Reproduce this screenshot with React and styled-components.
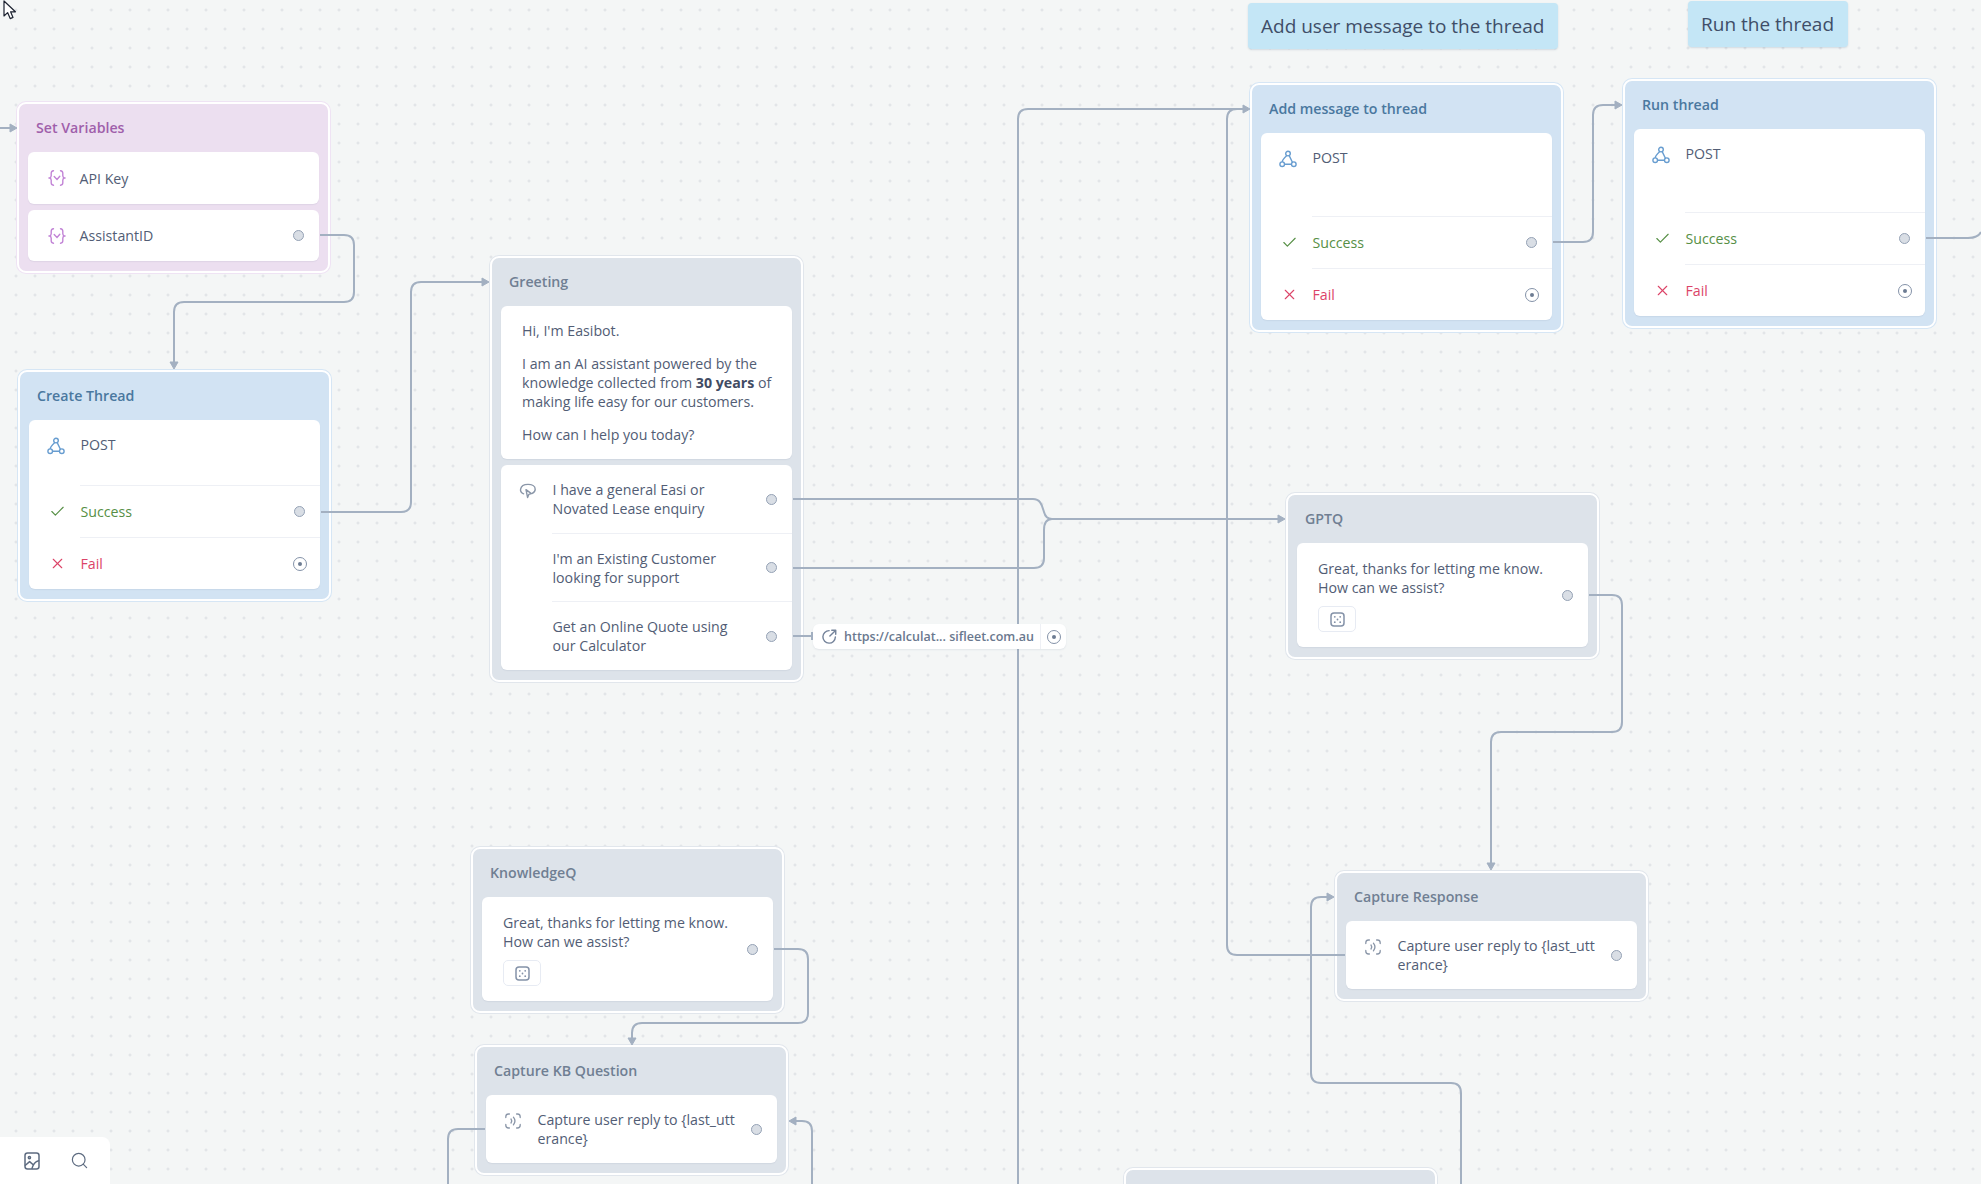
import React from "react";
import styled, { createGlobalStyle } from "styled-components";
import { Check, X, Search } from "lucide-react";

const GlobalStyle = createGlobalStyle`
  html, body {
    margin: 0;
    height: 100%;
    overflow: hidden;
  }
  body {
    font-family: "Open Sans", "Liberation Sans", sans-serif;
    color: #525d75;
  }
`;

const tones = {
  purple: { fill: "#ecdff0", ring: "#efe3f4", title: "#a05fab" },
  blue: { fill: "#d2e3f3", ring: "#d6e6f5", title: "#4a789f" },
  gray: { fill: "#dde3ea", ring: "#e1e6ec", title: "#707f93" },
};

const LINE = "#a3b0c1";

const Canvas = styled.div`
  position: relative;
  width: 1981px;
  height: 1184px;
  overflow: hidden;
  background-color: #f4f6f6;
  background-image: radial-gradient(circle, #dcdfe3 1px, transparent 1.4px);
  background-size: 19px 19px;
  background-position: 6.5px 0.5px;
`;

const Wires = styled.svg`
  position: absolute;
  inset: 0;
  pointer-events: none;
`;

const Cursor = styled.svg`
  position: absolute;
  left: 3px;
  top: 0;
`;

const Node = styled.section`
  position: absolute;
  left: ${(p) => p.$x}px;
  top: ${(p) => p.$y}px;
  box-sizing: border-box;
  width: 313px;
  padding: 0 9px 10px;
  display: flex;
  flex-direction: column;
  gap: 6px;
  background: ${(p) => tones[p.$tone].fill};
  border: 2px solid #fff;
  border-radius: 9px;
  box-shadow: 0 0 0 1px ${(p) => tones[p.$tone].ring};
`;

const Title = styled.h3`
  margin: 0 0 -6px 8px;
  height: 48px;
  line-height: 48px;
  font-size: 14.2px;
  font-weight: 600;
  color: ${(p) => tones[p.$tone].title};
`;

const Card = styled.div`
  background: #fff;
  border-radius: 6px;
  box-shadow: 0 1px 1px rgba(120, 135, 160, 0.12);
  overflow: hidden;
`;

const Row = styled.div`
  display: flex;
  height: ${(p) => p.$h}px;
  align-items: ${(p) => (p.$top ? "flex-start" : "center")};
`;

const IconCell = styled.div`
  flex: none;
  align-self: ${(p) => (p.$top ? "flex-start" : "center")};
  box-sizing: border-box;
  width: 51px;
  padding-left: ${(p) => (p.$top ? "18px" : "20px")};
  height: 19px;
  margin-top: ${(p) => (p.$top ? "16px" : "0")};
  display: flex;
  align-items: center;
  color: ${(p) => p.$color || "#8a96a8"};
`;

const RowBody = styled.div`
  flex: 1;
  align-self: stretch;
  min-width: 0;
  display: flex;
  align-items: ${(p) => (p.$top ? "flex-start" : "center")};
  justify-content: space-between;
  padding-top: ${(p) => (p.$top ? "15px" : "0")};
  border-top: ${(p) => (p.$divided ? "1px solid #eef0f5" : "none")};
`;

const Label = styled.span`
  padding-left: 0.5px;
  font-size: 14.2px;
  line-height: 19px;
  white-space: nowrap;
  color: ${(p) => p.$color || "#525d75"};
`;

const PortSlot = styled.div`
  flex: none;
  width: 14px;
  margin-right: 13.5px;
  display: flex;
  justify-content: center;
`;

const Port = styled.i`
  display: block;
  box-sizing: border-box;
  width: 11px;
  height: 11px;
  border-radius: 50%;
  background: #d9dee5;
  border: 1.5px solid #95a2b5;
`;

const OpenPort = styled.i`
  display: flex;
  align-items: center;
  justify-content: center;
  box-sizing: border-box;
  width: 14px;
  height: 14px;
  border-radius: 50%;
  background: #fff;
  border: 1.5px solid #8492a8;

  &::after {
    content: "";
    width: 4px;
    height: 4px;
    border-radius: 50%;
    background: #6d7c93;
  }
`;

const Message = styled.div`
  padding: 15px 10px 15px 21px;
  font-size: 14.2px;
  line-height: 19px;
  white-space: nowrap;

  p {
    margin: 0 0 14px;
  }
  p:last-child {
    margin-bottom: 0;
  }
  b {
    font-weight: 700;
    color: #414b63;
  }
`;

const PromptRow = styled.div`
  display: flex;
  align-items: center;
  padding: 16px 0 15px 21px;
`;

const PromptBody = styled.div`
  flex: 1;
  font-size: 14.2px;
  line-height: 19px;
`;

const DiceChip = styled.div`
  width: 38px;
  height: 26px;
  margin-top: 9px;
  box-sizing: border-box;
  border: 1px solid #e7ebf3;
  border-radius: 5px;
  display: flex;
  align-items: center;
  justify-content: center;
`;

const UrlChip = styled.div`
  position: absolute;
  left: 813px;
  top: 624px;
  height: 25px;
  display: flex;
  align-items: center;
  background: #fff;
  border-radius: 6px;
  box-shadow: 0 1px 2px rgba(120, 135, 160, 0.14);
  font-size: 12.5px;
  font-weight: 600;
`;

const UrlText = styled.div`
  display: flex;
  align-items: center;
  gap: 6px;
  width: 228px;
  box-sizing: border-box;
  padding-left: 8px;
  height: 100%;
  border-right: 1px solid #eef0f5;
  white-space: pre;
  color: #6a788e;
`;

const UrlPort = styled.div`
  width: 25px;
  display: flex;
  justify-content: center;
`;

const Note = styled.div`
  position: absolute;
  left: ${(p) => p.$x}px;
  top: ${(p) => p.$y}px;
  height: 46px;
  line-height: 46px;
  padding: 0 14px 0 13px;
  background: #c4e6f6;
  border-radius: 4px;
  box-shadow: 0 1px 2px rgba(90, 120, 150, 0.22);
  font-size: 19px;
  color: #3f4e68;
`;

const Toolbar = styled.div`
  position: absolute;
  left: 0;
  bottom: 0;
  width: 110px;
  height: 47px;
  box-sizing: border-box;
  padding-left: 23px;
  display: flex;
  align-items: center;
  gap: 29px;
  background: #fff;
  border-top-right-radius: 8px;
  color: #5d6b80;
`;

const VarIcon = () => (
  <svg width="18" height="18" viewBox="0 0 18 18" fill="none" stroke="#c284d6" strokeWidth="1.4" strokeLinecap="round">
    <path d="M5.5 1.8C4 2 3.2 2.9 3.2 4.2V6.8C3.2 7.9 2.6 8.7 1.6 9C2.6 9.3 3.2 10.1 3.2 11.2V13.8C3.2 15.1 4 16 5.5 16.2" />
    <path d="M12.5 1.8C14 2 14.8 2.9 14.8 4.2V6.8C14.8 7.9 15.4 8.7 16.4 9C15.4 9.3 14.8 10.1 14.8 11.2V13.8C14.8 15.1 14 16 12.5 16.2" />
    <path d="M6.2 7.6L9 10.4L11.8 7.2" />
  </svg>
);

const ApiIcon = () => (
  <svg width="18" height="18" viewBox="0 0 18 18" fill="none" stroke="#689dd0" strokeWidth="1.4">
    <circle cx="9" cy="3.6" r="2.3" />
    <circle cx="3.2" cy="14.2" r="2.3" />
    <circle cx="14.8" cy="14.2" r="2.3" />
    <path d="M3.2 11.9C3.4 9.4 5.4 7.6 7.6 5.6M10.2 5.6L13.4 12.2M5.5 14.2H12.5" />
  </svg>
);

const ChoiceIcon = () => (
  <svg width="18" height="18" viewBox="0 0 18 18" fill="none" stroke="#8a96a8" strokeWidth="1.4" strokeLinejoin="round" strokeLinecap="round">
    <path d="M4.6 11.8C2.4 11 1.2 9.4 1.6 7.2C2.2 3.8 5.6 2.4 9 2.4C12.8 2.4 16.2 4.2 16.2 7.2C16.2 9.2 15 10.6 13.2 11.4" />
    <path d="M7 7.6L12.4 11.6L9.8 12.4L8.6 15.6Z" />
  </svg>
);

const CaptureIcon = () => (
  <svg width="18" height="18" viewBox="0 0 18 18" fill="none" stroke="#8a96a8" strokeWidth="1.3" strokeLinecap="round">
    <path d="M5.4 2H4.6A2.8 2.8 0 0 0 1.8 4.8V5.6M12.6 2H13.4A2.8 2.8 0 0 1 16.2 4.8V5.6M1.8 12.4V13.2A2.8 2.8 0 0 0 4.6 16H5.4M16.2 12.4V13.2A2.8 2.8 0 0 1 13.4 16H12.6" />
    <path d="M7 7C7.9 8.2 7.9 9.8 7 11M9.4 5.2C11.2 7.4 11.2 10.6 9.4 12.8" />
  </svg>
);

const LinkIcon = () => (
  <svg width="17" height="17" viewBox="0 0 18 18" fill="none" stroke="#74839a" strokeWidth="1.5" strokeLinecap="round" strokeLinejoin="round">
    <path d="M8.6 2.8A6.6 6.6 0 1 0 15.2 9.6" />
    <path d="M9.4 8.6L15.4 2.6M11.4 2.4H15.6V6.6" />
  </svg>
);

const ImageIcon = () => (
  <svg width="18" height="20" viewBox="0 0 18 20" fill="none" stroke="currentColor" strokeWidth="1.5" strokeLinecap="round" strokeLinejoin="round">
    <rect x="2" y="2" width="14" height="16" rx="2.5" />
    <circle cx="6.4" cy="6.6" r="1.1" />
    <path d="M2.4 14.2L6.6 10.6L10.2 13.8M9 17.4C10 13.8 12.4 10.6 15.6 9.8" />
  </svg>
);

const DiceIcon = () => (
  <svg width="15" height="15" viewBox="0 0 15 15" fill="#8492a8" stroke="none">
    <rect x="1" y="1" width="13" height="13" rx="3" fill="none" stroke="#8492a8" strokeWidth="1.5" />
    <circle cx="4.8" cy="4.8" r="0.9" />
    <circle cx="10.2" cy="4.8" r="0.9" />
    <circle cx="7.5" cy="7.5" r="0.9" />
    <circle cx="4.8" cy="10.2" r="0.9" />
    <circle cx="10.2" cy="10.2" r="0.9" />
  </svg>
);

const Arrow = ({ x, y, dir }) => {
  const shapes = {
    right: `${x},${y} ${x - 7},${y - 4} ${x - 7},${y + 4}`,
    left: `${x},${y} ${x + 7},${y - 4} ${x + 7},${y + 4}`,
    down: `${x},${y} ${x - 4},${y - 7} ${x + 4},${y - 7}`,
  };
  return <polygon points={shapes[dir]} fill={LINE} stroke={LINE} strokeWidth="1" strokeLinejoin="round" />;
};

const wirePaths = [
  "M0 128H12",
  "M320 235H344Q354 235 354 245V292Q354 302 344 302H184Q174 302 174 312V364",
  "M321 512H401Q411 512 411 502V292Q411 282 421 282H484",
  "M793 499H1033C1041 499 1042 506 1044 512C1045 516 1047 519 1052 519H1280",
  "M793 568H1034Q1044 568 1044 558V530Q1044 519 1052 519",
  "M793 636H812M812 632V640",
  "M1018 1184V119Q1018 109 1028 109H1245",
  "M1345 955H1237Q1227 955 1227 945V119Q1227 109 1237 109",
  "M1553 242H1583Q1593 242 1593 232V115Q1593 105 1603 105H1617",
  "M1926 238H1968Q1978 238 1981 232",
  "M1589 595H1612Q1622 595 1622 605V722Q1622 732 1612 732H1501Q1491 732 1491 742V865",
  "M1461 1184V1093Q1461 1083 1451 1083H1321Q1311 1083 1311 1073V907Q1311 897 1321 897H1329",
  "M774 949H798Q808 949 808 959V1013Q808 1023 798 1023H642Q632 1023 632 1033V1040",
  "M485 1129H458Q448 1129 448 1139V1184",
  "M812 1184V1131Q812 1121 802 1121H794",
];

const arrows = [
  { x: 17, y: 128, dir: "right" },
  { x: 174, y: 369, dir: "down" },
  { x: 489, y: 282, dir: "right" },
  { x: 1285, y: 519, dir: "right" },
  { x: 1250, y: 109, dir: "right" },
  { x: 1622, y: 105, dir: "right" },
  { x: 1491, y: 870, dir: "down" },
  { x: 1334, y: 897, dir: "right" },
  { x: 632, y: 1045, dir: "down" },
  { x: 789, y: 1121, dir: "left" },
];

const GREEN = "#568f45";
const RED = "#dc4468";

function ApiNode({ x, y, title, postHeight }) {
  return (
    <Node $x={x} $y={y} $tone="blue">
      <Title $tone="blue">{title}</Title>
      <Card>
        <Row $h={postHeight} $top>
          <IconCell $top>
            <ApiIcon />
          </IconCell>
          <RowBody $top>
            <Label>POST</Label>
          </RowBody>
        </Row>
        <Row $h={52}>
          <IconCell $color={GREEN}>
            <Check size={17} strokeWidth={1.6} />
          </IconCell>
          <RowBody $divided>
            <Label $color={GREEN}>Success</Label>
            <PortSlot>
              <Port />
            </PortSlot>
          </RowBody>
        </Row>
        <Row $h={52}>
          <IconCell $color={RED}>
            <X size={17} strokeWidth={1.6} />
          </IconCell>
          <RowBody $divided>
            <Label $color={RED}>Fail</Label>
            <PortSlot>
              <OpenPort />
            </PortSlot>
          </RowBody>
        </Row>
      </Card>
    </Node>
  );
}

function PromptNode({ x, y, title }) {
  return (
    <Node $x={x} $y={y} $tone="gray">
      <Title $tone="gray">{title}</Title>
      <Card>
        <PromptRow>
          <PromptBody>
            Great, thanks for letting me know.
            <br />
            How can we assist?
            <DiceChip>
              <DiceIcon />
            </DiceChip>
          </PromptBody>
          <PortSlot>
            <Port />
          </PortSlot>
        </PromptRow>
      </Card>
    </Node>
  );
}

function CaptureNode({ x, y, title }) {
  return (
    <Node $x={x} $y={y} $tone="gray">
      <Title $tone="gray">{title}</Title>
      <Card>
        <Row $h={68}>
          <IconCell $top>
            <CaptureIcon />
          </IconCell>
          <RowBody>
            <Label>
              Capture user reply to {"{last_utt"}
              <br />
              {"erance}"}
            </Label>
            <PortSlot>
              <Port />
            </PortSlot>
          </RowBody>
        </Row>
      </Card>
    </Node>
  );
}

export default function App() {
  return (
    <Canvas>
      <GlobalStyle />

      <Note $x={1248} $y={3}>Add user message to the thread</Note>
      <Note $x={1688} $y={1}>Run the thread</Note>

      <Node $x={17} $y={102} $tone="purple">
        <Title $tone="purple">Set Variables</Title>
        <Card>
          <Row $h={52}>
            <IconCell>
              <VarIcon />
            </IconCell>
            <RowBody>
              <Label>API Key</Label>
            </RowBody>
          </Row>
        </Card>
        <Card>
          <Row $h={51}>
            <IconCell>
              <VarIcon />
            </IconCell>
            <RowBody>
              <Label>AssistantID</Label>
              <PortSlot>
                <Port />
              </PortSlot>
            </RowBody>
          </Row>
        </Card>
      </Node>

      <ApiNode x={18} y={370} title="Create Thread" postHeight={65} />
      <ApiNode x={1250} y={83} title="Add message to thread" postHeight={83} />
      <ApiNode x={1623} y={79} title="Run thread" postHeight={83} />

      <Node $x={490} $y={256} $tone="gray">
        <Title $tone="gray">Greeting</Title>
        <Card>
          <Message>
            <p>Hi, I'm Easibot.</p>
            <p>
              I am an AI assistant powered by the
              <br />
              knowledge collected from <b>30 years</b> of
              <br />
              making life easy for our customers.
            </p>
            <p>How can I help you today?</p>
          </Message>
        </Card>
        <Card>
          <Row $h={68}>
            <IconCell $top>
              <ChoiceIcon />
            </IconCell>
            <RowBody>
              <Label>
                I have a general Easi or
                <br />
                Novated Lease enquiry
              </Label>
              <PortSlot>
                <Port />
              </PortSlot>
            </RowBody>
          </Row>
          <Row $h={68}>
            <IconCell />
            <RowBody $divided>
              <Label>
                I'm an Existing Customer
                <br />
                looking for support
              </Label>
              <PortSlot>
                <Port />
              </PortSlot>
            </RowBody>
          </Row>
          <Row $h={69}>
            <IconCell />
            <RowBody $divided>
              <Label>
                Get an Online Quote using
                <br />
                our Calculator
              </Label>
              <PortSlot>
                <Port />
              </PortSlot>
            </RowBody>
          </Row>
        </Card>
      </Node>

      <PromptNode x={1286} y={493} title="GPTQ" />
      <PromptNode x={471} y={847} title="KnowledgeQ" />
      <CaptureNode x={1335} y={871} title="Capture Response" />
      <CaptureNode x={475} y={1045} title="Capture KB Question" />

      <Node $x={1124} $y={1168} $tone="gray">
        <Title $tone="gray" />
      </Node>

      <Wires width="1981" height="1184" fill="none" stroke={LINE} strokeWidth="2">
        {wirePaths.map((d) => (
          <path key={d} d={d} />
        ))}
        {arrows.map((a) => (
          <Arrow key={`${a.x}-${a.y}`} {...a} />
        ))}
      </Wires>

      <UrlChip>
        <UrlText>
          <LinkIcon />
          https://calculat... sifleet.com.au
        </UrlText>
        <UrlPort>
          <OpenPort />
        </UrlPort>
      </UrlChip>

      <Toolbar>
        <ImageIcon />
        <Search size={19} strokeWidth={1.5} />
      </Toolbar>

      <Cursor width="15" height="20" viewBox="0 0 15 20">
        <path d="M1 1V16L4.6 12.6L7.2 18.6L10 17.4L7.6 11.8H12.4Z" fill="#fff" stroke="#1c2230" strokeWidth="1.2" strokeLinejoin="round" />
      </Cursor>
    </Canvas>
  );
}
